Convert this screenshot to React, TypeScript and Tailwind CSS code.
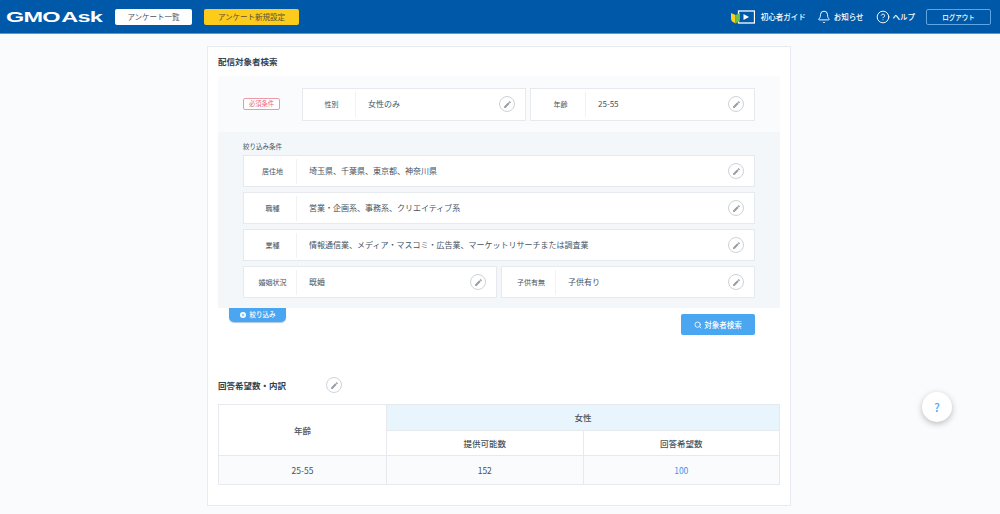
import { Bell, CircleHelp, Search } from 'lucide-react';
import { MdEdit } from 'react-icons/md';

function EditButton() {
  return (
    <span className="flex h-4 w-4 shrink-0 items-center justify-center rounded-full border border-[#cfd3d7] bg-white">
      <MdEdit className="h-[9px] w-[9px] text-[#969da4]" />
    </span>
  );
}

function Condition({
  label,
  value,
  labelWidth,
  className,
}: {
  label: string;
  value: string;
  labelWidth: string;
  className: string;
}) {
  return (
    <div className={`flex items-center border border-[#e6e9ee] bg-white pr-[10px] ${className}`}>
      <span className={`flex h-[25px] shrink-0 items-center justify-center border-r border-[#f0f2f5] pl-[5px] text-[7px] text-[#46535f] ${labelWidth}`}>
        {label}
      </span>
      <span className="flex-1 pl-3 text-[8px] text-[#46535f]">{value}</span>
      <EditButton />
    </div>
  );
}

function Row({ label, value }: { label: string; value: string }) {
  return <Condition label={label} value={value} labelWidth="w-[53px]" className="h-8 w-full" />;
}

function GuideIcon() {
  return (
    <svg width="24" height="14" viewBox="0 0 24 14" className="shrink-0">
      <rect x="7.5" y="1" width="16" height="12" fill="#0058a8" stroke="#fff" strokeWidth="1.3" />
      <path d="M12.5 4 L18 7 L12.5 10Z" fill="#fff" />
      <path d="M0 3 L4.5 5 V13.5 L2 12 Q0 11 0 8.5Z" fill="#fcd21f" />
      <path d="M9 3 L4.5 5 V13.5 L7 12 Q9 11 9 8.5Z" fill="#6cc04a" />
    </svg>
  );
}

export default function App() {
  return (
    <div
      className="relative h-[514px] w-[1000px] overflow-hidden bg-[#f9fbfd] text-[#46535f]"
      style={{ fontFamily: '"Noto Sans CJK JP", "Noto Sans", sans-serif' }}
    >
      <header className="flex h-[34px] items-center border-b border-[#4d9be0] bg-[#0058a8] text-white">
        <div className="ml-[6px] flex w-[109px] items-center" style={{ fontFamily: '"Liberation Sans", sans-serif' }}>
          <span className="origin-left scale-x-[1.68] text-[14px] leading-none font-bold tracking-[-0.5px] whitespace-nowrap">
            GMO<span className="ml-[1px]">Ask</span>
          </span>
        </div>
        <button className="h-4 w-[77px] rounded-[2px] bg-white text-[7.5px] leading-4 text-[#46535f]">アンケート一覧</button>
        <button className="ml-3 h-4 w-[95px] rounded-[2px] bg-[#fccb1c] text-[7.5px] leading-4 text-[#55533a]">アンケート新規設定</button>
        <div className="ml-auto flex items-center pr-[9px]">
          <GuideIcon />
          <span className="ml-[6px] text-[7.5px] font-medium">初心者ガイド</span>
          <Bell className="ml-[11px] h-[14px] w-[14px]" strokeWidth={1.6} />
          <span className="ml-[3px] text-[7.5px] font-medium">お知らせ</span>
          <CircleHelp className="ml-[12px] h-[14px] w-[14px]" strokeWidth={1.6} />
          <span className="ml-[3px] text-[7.5px] font-medium">ヘルプ</span>
          <button className="ml-[11px] h-4 w-[65px] rounded-[2px] border border-[#5fa5e3] text-[6.5px] leading-[14px] font-medium">ログアウト</button>
        </div>
      </header>

      <main className="ml-[207px] mt-3 h-[460px] w-[584px] border border-[#e8ebef] bg-white px-[10px]">
        <h2 className="flex h-[29px] items-center pb-[2px] text-[8.5px] leading-[14px] font-bold text-[#33424f]">配信対象者検索</h2>

        <section className="h-[232px] bg-[#f4f7fa]">
          <div className="flex h-[56px] items-center bg-[#fafbfc] px-[25px]">
            <span className="flex h-3 w-[37px] shrink-0 items-center justify-center rounded-[2px] border border-[#ee9aa5] bg-white text-[6.25px] text-[#e46a7c]">必須条件</span>
            <div className="ml-[22px] flex flex-1 gap-1">
              <Condition label="性別" value="女性のみ" labelWidth="w-[53px]" className="h-[33px] w-[224px]" />
              <Condition label="年齢" value="25-55" labelWidth="w-[55px]" className="h-[33px] flex-1" />
            </div>
          </div>
          <div className="px-[25px]">
            <p className="h-[23px] pt-[9px] text-[6.5px] leading-[10px]">絞り込み条件</p>
            <div className="flex flex-col gap-[5px]">
              <Row label="居住地" value="埼玉県、千葉県、東京都、神奈川県" />
              <Row label="職種" value="営業・企画系、事務系、クリエイティブ系" />
              <Row label="業種" value="情報通信業、メディア・マスコミ・広告業、マーケットリサーチまたは調査業" />
              <div className="flex gap-1">
                <Condition label="婚姻状況" value="既婚" labelWidth="w-[53px]" className="h-8 w-[254px]" />
                <Condition label="子供有無" value="子供有り" labelWidth="w-[54px]" className="h-8 flex-1" />
              </div>
            </div>
          </div>
        </section>

        <div className="flex h-[66px] items-start justify-between pl-[11px] pr-[25px]">
          <button className="flex h-[14px] w-[57px] items-center justify-center gap-[4px] rounded-b-[5px] bg-[#4ba6f2] text-[6.5px] font-medium text-white shadow-[0_1px_1px_rgba(30,90,160,0.35)]">
            <svg width="6" height="6" viewBox="0 0 6 6">
              <circle cx="3" cy="3" r="3" fill="#fff" />
              <path d="M3 1.5V4.5M1.5 3H4.5" stroke="#4ba6f2" strokeWidth="0.7" />
            </svg>
            絞り込み
          </button>
          <button className="mt-[6px] flex h-[21px] w-[74px] items-center justify-center gap-[2px] rounded-[2px] bg-[#4ba6f2] text-[7.5px] font-medium text-white">
            <Search className="h-2 w-2" strokeWidth={2.5} />
            対象者検索
          </button>
        </div>

        <div className="flex h-[22px] items-center">
          <h2 className="w-[108px] text-[8.5px] font-bold text-[#33424f]">回答希望数・内訳</h2>
          <EditButton />
        </div>

        <table className="mt-[8px] w-[562px] table-fixed border-collapse text-[8.5px]">
          <tbody>
            <tr className="h-[26px]">
              <td rowSpan={2} className="w-[168px] border border-[#e6e9ee] text-center font-medium">年齢</td>
              <td colSpan={2} className="border border-[#e6e9ee] bg-[#e9f5fd] text-center font-medium">女性</td>
            </tr>
            <tr className="h-[25px]">
              <td className="w-[196px] border border-[#e6e9ee] text-center font-medium">提供可能数</td>
              <td className="border border-[#e6e9ee] text-center font-medium">回答希望数</td>
            </tr>
            <tr className="h-[29px] bg-[#f9fbfd]">
              <td className="border border-[#e6e9ee] text-center">25-55</td>
              <td className="border border-[#e6e9ee] text-center">152</td>
              <td className="border border-[#e6e9ee] text-center text-[#3f97ea]">100</td>
            </tr>
          </tbody>
        </table>
      </main>

      <button className="absolute left-[922px] top-[392px] h-[30px] w-[30px] rounded-full bg-white text-[12px] font-medium text-[#4ba6f2] shadow-[0_2px_6px_rgba(0,0,0,0.25)]">?</button>
    </div>
  );
}
